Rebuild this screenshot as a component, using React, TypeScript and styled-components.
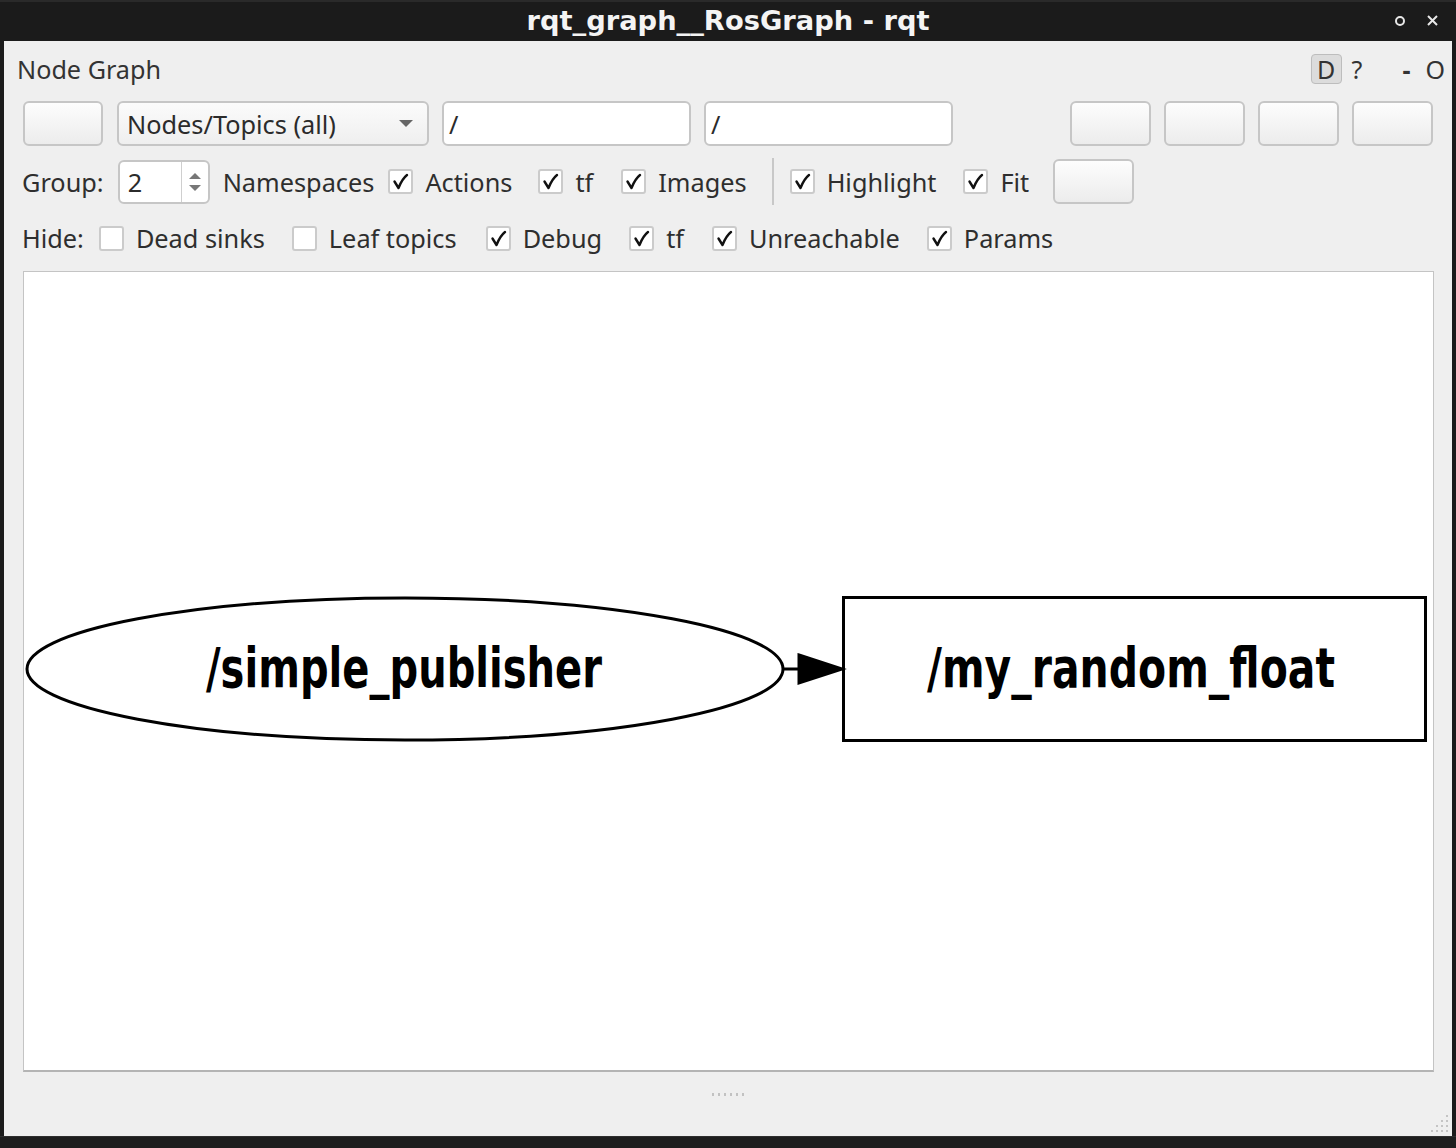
import React from "react";
import styled, { createGlobalStyle } from "styled-components";

const Global = createGlobalStyle`
  html, body { margin: 0; padding: 0; overflow: hidden; background: #1b1b1b; }
  body { font-family: "Noto Sans", "Open Sans", sans-serif; }
`;

const Frame = styled.div`
  width: 1456px;
  height: 1148px;
  background: #1b1b1b;
  display: flex;
  flex-direction: column;
`;

const TitleBar = styled.div`
  height: 41px;
  flex: none;
  position: relative;
  display: flex;
  align-items: center;
  justify-content: center;
  border-top: 2px solid #2a2a2a;
  box-sizing: border-box;
`;

const TitleText = styled.div`
  color: #f4f4f4;
  font-family: "DejaVu Sans", sans-serif;
  font-weight: 700;
  font-size: 27.3px;
  margin-top: -2px;
`;

const TitleControls = styled.div`
  position: absolute;
  right: 17px;
  top: 12px;
  display: flex;
  gap: 20px;
  align-items: center;
  color: #e8e8e8;
`;

const Client = styled.div`
  flex: 1;
  margin: 0 4px;
  background: #efefef;
  display: flex;
  flex-direction: column;
  color: #2b2b2b;
  font-size: 25.3px;
`;

const BottomStrip = styled.div`
  height: 11px;
  flex: none;
  background: #1e1e1e;
  border-top: 1px solid #2e2e2e;
`;

const Header = styled.div`
  height: 56px;
  display: flex;
  align-items: center;
  padding: 0 7px 0 13px;
`;

const HeaderTitle = styled.div`
  flex: 1;
  font-size: 25.2px;
  color: #333;
`;

const DButton = styled.div`
  width: 29px;
  height: 28px;
  border: 1px solid #bdbdbd;
  border-radius: 4px;
  background: #dcdcdc;
  display: flex;
  align-items: center;
  justify-content: center;
  font-size: 25px;
  color: #333;
`;

const HeaderGlyph = styled.div<{ $ml: number }>`
  margin-left: ${(p) => p.$ml}px;
  font-size: 25px;
  color: #333;
  font-weight: ${(p) => (p.$ml > 30 ? 700 : 400)};
`;

const Row = styled.div<{ $mt: number; $h: number; $pl: number }>`
  margin-top: ${(p) => p.$mt}px;
  height: ${(p) => p.$h}px;
  padding: 0 19px 0 ${(p) => p.$pl}px;
  display: flex;
  align-items: center;
  flex: none;
`;

const Button = styled.div<{ $w?: number; $ml?: number }>`
  width: ${(p) => p.$w ?? 81}px;
  height: 45px;
  box-sizing: border-box;
  margin-left: ${(p) => p.$ml ?? 0}px;
  border: 2px solid #c6c6c6;
  border-radius: 6px;
  background: linear-gradient(#fdfdfd, #ececec);
  flex: none;
`;

const Combo = styled.div`
  width: 312px;
  height: 45px;
  box-sizing: border-box;
  margin-left: 14px;
  border: 2px solid #c6c6c6;
  border-radius: 6px;
  background: linear-gradient(#fbfbfb, #efefef);
  display: flex;
  align-items: center;
  padding: 0 14px 0 8px;
  color: #2b2b2b;
  flex: none;
`;

const ComboText = styled.span`
  flex: 1;
`;

const ComboArrow = styled.div`
  width: 0;
  height: 0;
  border-left: 7px solid transparent;
  border-right: 7px solid transparent;
  border-top: 7px solid #666;
`;

const LineEdit = styled.div`
  width: 249px;
  height: 45px;
  box-sizing: border-box;
  margin-left: 13px;
  border: 2px solid #c6c6c6;
  border-radius: 6px;
  background: #fff;
  display: flex;
  align-items: center;
  padding-left: 5px;
  color: #2b2b2b;
  flex: none;
`;

const Spacer = styled.div`
  flex: 1;
`;

const Label = styled.span<{ $mr?: number }>`
  margin-right: ${(p) => p.$mr ?? 0}px;
  white-space: nowrap;
  color: #2e2e2e;
`;

const SpinBox = styled.div`
  width: 92px;
  height: 44px;
  box-sizing: border-box;
  border: 2px solid #c6c6c6;
  border-radius: 6px;
  background: #fff;
  display: flex;
  margin-right: 13px;
  flex: none;
`;

const SpinValue = styled.div`
  flex: 1;
  display: flex;
  align-items: center;
  padding-left: 8px;
`;

const SpinArrows = styled.div`
  width: 26px;
  border-left: 1px solid #cfcfcf;
  display: flex;
  flex-direction: column;
  align-items: center;
  justify-content: center;
  gap: 6px;
`;

const ArrowUp = styled.div`
  width: 0;
  height: 0;
  border-left: 6px solid transparent;
  border-right: 6px solid transparent;
  border-bottom: 6px solid #777;
`;

const ArrowDown = styled.div`
  width: 0;
  height: 0;
  border-left: 6px solid transparent;
  border-right: 6px solid transparent;
  border-top: 6px solid #777;
`;

const CheckItem = styled.div<{ $mr?: number }>`
  display: flex;
  align-items: center;
  gap: 12px;
  margin-right: ${(p) => p.$mr ?? 26}px;
  flex: none;
`;

const Box = styled.div`
  width: 25px;
  height: 25px;
  box-sizing: border-box;
  border: 2px solid #cbcbcb;
  border-radius: 3px;
  background: #fff;
  display: flex;
  align-items: center;
  justify-content: center;
`;

const VSep = styled.div`
  width: 2px;
  height: 47px;
  background: #c8c8c8;
  margin-right: 16px;
  flex: none;
`;

const GraphView = styled.div`
  margin: 20px 18px 0 19px;
  height: 801px;
  box-sizing: border-box;
  background: #fff;
  border: 1px solid #c4c4c4;
  border-bottom: 2px solid #b4b4b4;
  flex: none;
  overflow: hidden;
`;

const Footer = styled.div`
  flex: 1;
  position: relative;
  display: flex;
  justify-content: center;
  padding-top: 21px;
`;

const SplitDots = styled.div`
  display: flex;
  gap: 4px;
  height: 3px;
`;

const Dot = styled.div`
  width: 2px;
  height: 3px;
  background: #c2c2c2;
`;

const Grip = styled.svg`
  position: absolute;
  right: 3px;
  bottom: 3px;
`;

const Check = () => (
  <svg width="19" height="19" viewBox="0 0 19 19">
    <path d="M3.5 9.5 L7.5 16 Q11 7 16 3" fill="none" stroke="#111" strokeWidth="2.4" strokeLinecap="round" strokeLinejoin="round" />
  </svg>
);

const CB = ({ label, checked, mr }: { label: string; checked: boolean; mr?: number }) => (
  <CheckItem $mr={mr}>
    <Box>{checked && <Check />}</Box>
    <Label>{label}</Label>
  </CheckItem>
);

export default function App() {
  return (
    <Frame>
      <Global />
      <TitleBar>
        <TitleText>rqt_graph__RosGraph - rqt</TitleText>
        <TitleControls>
          <svg width="12" height="12" viewBox="0 0 12 12">
            <circle cx="6" cy="6" r="4" fill="none" stroke="#e8e8e8" strokeWidth="2" />
          </svg>
          <svg width="13" height="13" viewBox="0 0 13 13">
            <path d="M2 2 L11 11 M11 2 L2 11" stroke="#e8e8e8" strokeWidth="2" />
          </svg>
        </TitleControls>
      </TitleBar>
      <Client>
        <Header>
          <HeaderTitle>Node Graph</HeaderTitle>
          <DButton>D</DButton>
          <HeaderGlyph $ml={10}>?</HeaderGlyph>
          <HeaderGlyph $ml={40}>-</HeaderGlyph>
          <HeaderGlyph $ml={15}>O</HeaderGlyph>
        </Header>
        <Row $mt={4} $h={45} $pl={19}>
          <Button $w={80} />
          <Combo>
            <ComboText>Nodes/Topics (all)</ComboText>
            <ComboArrow />
          </Combo>
          <LineEdit>/</LineEdit>
          <LineEdit>/</LineEdit>
          <Spacer />
          <Button />
          <Button $ml={13} />
          <Button $ml={13} />
          <Button $ml={13} />
        </Row>
        <Row $mt={12} $h={47} $pl={18}>
          <Label $mr={14}>Group:</Label>
          <SpinBox>
            <SpinValue>2</SpinValue>
            <SpinArrows>
              <ArrowUp />
              <ArrowDown />
            </SpinArrows>
          </SpinBox>
          <Label $mr={14}>Namespaces</Label>
          <CB label="Actions" checked />
          <CB label="tf" checked mr={28} />
          <CB label="Images" checked mr={25} />
          <VSep />
          <CB label="Highlight" checked mr={27} />
          <CB label="Fit" checked mr={24} />
          <Button />
        </Row>
        <Row $mt={20} $h={26} $pl={18}>
          <Label $mr={15}>Hide:</Label>
          <CB label="Dead sinks" checked={false} mr={27} />
          <CB label="Leaf topics" checked={false} mr={29} />
          <CB label="Debug" checked mr={27} />
          <CB label="tf" checked mr={28} />
          <CB label="Unreachable" checked mr={27} />
          <CB label="Params" checked />
        </Row>
        <GraphView>
          <svg width="1409" height="798" viewBox="0 0 1409 798">
            <ellipse cx="381" cy="397" rx="378" ry="71" fill="none" stroke="#000" strokeWidth="3" />
            <line x1="759" y1="397" x2="776" y2="397" stroke="#000" strokeWidth="3" />
            <polygon points="775,383 818,397 775,411" fill="#000" stroke="#000" strokeWidth="3" strokeLinejoin="miter" />
            <rect x="819.5" y="325.5" width="582" height="143" fill="none" stroke="#000" strokeWidth="3" />
            <text
              x="380"
              y="415"
              textAnchor="middle"
              fontFamily="DejaVu Sans, sans-serif"
              fontWeight="700"
              fontSize="55"
              textLength="396"
              lengthAdjust="spacingAndGlyphs"
              fill="#000"
            >
              /simple_publisher
            </text>
            <text
              x="1107"
              y="415"
              textAnchor="middle"
              fontFamily="DejaVu Sans, sans-serif"
              fontWeight="700"
              fontSize="55"
              textLength="408"
              lengthAdjust="spacingAndGlyphs"
              fill="#000"
            >
              /my_random_float
            </text>
          </svg>
        </GraphView>
        <Footer>
          <SplitDots>
            {Array.from({ length: 6 }).map((_, i) => (
              <Dot key={i} />
            ))}
          </SplitDots>
          <Grip width="20" height="20" viewBox="0 0 20 20">
            {[
              [17, 2],
              [12, 7],
              [17, 7],
              [7, 12],
              [12, 12],
              [17, 12],
              [2, 17],
              [7, 17],
              [12, 17],
              [17, 17],
            ].map(([x, y], i) => (
              <rect key={i} x={x} y={y} width="2" height="2" fill="#c4c4c4" />
            ))}
          </Grip>
        </Footer>
      </Client>
      <BottomStrip />
    </Frame>
  );
}
